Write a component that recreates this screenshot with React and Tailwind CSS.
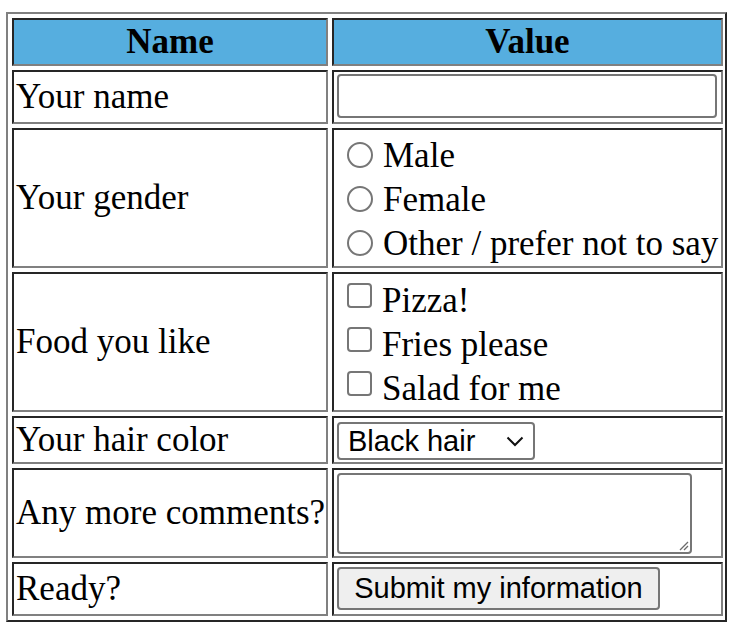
import React from "react";

const cell =
  "border-2 border-solid border-t-[#262626] border-l-[#262626] border-r-[#808080] border-b-[#808080] p-[2px]";
const serif = "font-['Liberation_Serif','Times_New_Roman',serif]";
const sans = "font-['Liberation_Sans',Arial,sans-serif]";

function Radio({ label }) {
  return (
    <div className="flex h-[44px] items-start">
      <span className="ml-[11px] mt-[10px] block h-[26px] w-[26px] shrink-0 rounded-full border-2 border-[#767676] bg-white" />
      <span className="ml-[10px] mt-[2px] whitespace-nowrap leading-[44px]">{label}</span>
    </div>
  );
}

function Check({ label }) {
  return (
    <div className="flex h-[44px] items-start">
      <span className="ml-[11px] mt-[7px] block h-[25px] w-[25px] shrink-0 rounded-[4px] border-2 border-[#767676] bg-white" />
      <span className="ml-[10px] mt-[3px] whitespace-nowrap leading-[44px]">{label}</span>
    </div>
  );
}

function Row({ label, h, children }) {
  return (
    <>
      <div className={`${cell} flex items-center whitespace-nowrap leading-[40px] ${h}`}>{label}</div>
      <div className={`${cell} overflow-hidden ${h}`}>{children}</div>
    </>
  );
}

export default function App() {
  return (
    <div className={`min-h-[634px] bg-white pl-[6px] pt-[12px] text-[35px] text-black ${serif}`}>
      <div className="inline-grid grid-cols-[316px_391px] gap-[4px] border-2 border-solid border-t-[#808080] border-l-[#808080] border-r-[#262626] border-b-[#262626] p-[4px] pr-[2px] pb-[4px]">
        <div className={`${cell} flex h-[48px] items-center justify-center bg-[#56aedf] font-bold`}>Name</div>
        <div className={`${cell} flex h-[48px] items-center justify-center bg-[#56aedf] font-bold`}>Value</div>
        <Row label="Your name" h="h-[54px]">
          <div className="ml-[1px] h-[44px] w-[380px] rounded-[4px] border-2 border-[#767676] bg-white" />
        </Row>
        <Row label="Your gender" h="h-[140px]">
          <Radio label="Male" />
          <Radio label="Female" />
          <Radio label="Other / prefer not to say" />
        </Row>
        <Row label="Food you like" h="h-[140px]">
          <Check label="Pizza!" />
          <Check label="Fries please" />
          <Check label="Salad for me" />
        </Row>
        <Row label="Your hair color" h="h-[48px]">
          <div
            className={`ml-[1px] mt-[2px] flex h-[38px] w-[198px] items-center justify-between rounded-[4px] border-2 border-[#767676] bg-white pl-[9px] pr-[9px] text-[29px] leading-none ${sans}`}
          >
            <span className="mt-[1px]">Black hair</span>
            <svg width="18" height="11" viewBox="0 0 18 11" fill="none">
              <path d="M1.5 1.5 L9 9 L16.5 1.5" stroke="#111" strokeWidth="2" />
            </svg>
          </div>
        </Row>
        <Row label="Any more comments?" h="h-[90px]">
          <div className="relative ml-[1px] mt-[1px] h-[81px] w-[355px] rounded-[4px] border-2 border-[#767676] bg-white">
            <svg className="absolute bottom-[1px] right-[1px]" width="12" height="12" viewBox="0 0 12 12" fill="none">
              <path d="M11 3 L3 11 M11 7 L7 11" stroke="#6b6b6b" strokeWidth="1.3" />
            </svg>
          </div>
        </Row>
        <Row label="Ready?" h="h-[54px]">
          <div
            className={`ml-[1px] mt-[1px] flex h-[43px] w-[323px] items-center justify-center rounded-[4px] border-2 border-[#767676] bg-[#efefef] text-[29px] leading-none ${sans}`}
          >
            Submit my information
          </div>
        </Row>
      </div>
    </div>
  );
}
